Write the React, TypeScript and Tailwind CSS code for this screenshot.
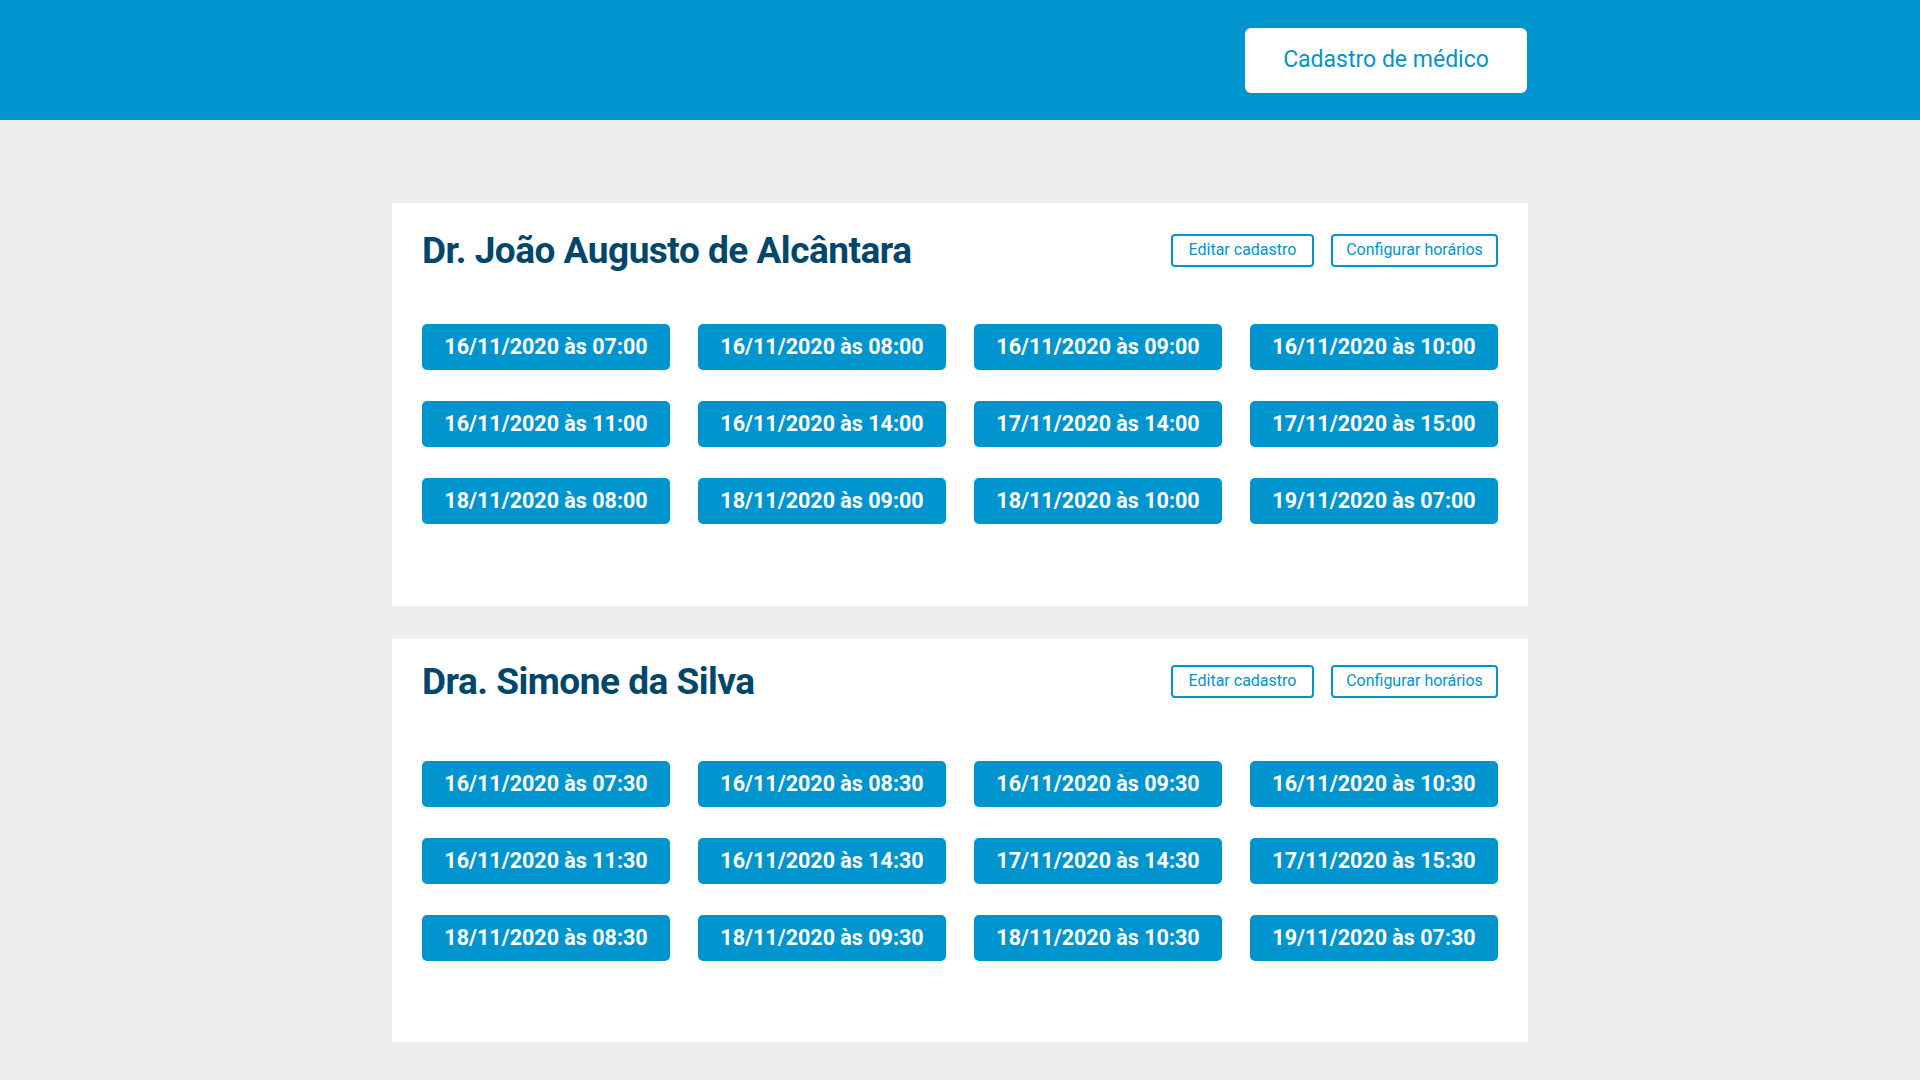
import React from "react";

const doctors = [
  {
    name: "Dr. João Augusto de Alcântara",
    pt: "pt-[30px]",
    mt: "mt-[57px]",
    pb: "pb-[82px]",
    slots: [
      "16/11/2020 às 07:00",
      "16/11/2020 às 08:00",
      "16/11/2020 às 09:00",
      "16/11/2020 às 10:00",
      "16/11/2020 às 11:00",
      "16/11/2020 às 14:00",
      "17/11/2020 às 14:00",
      "17/11/2020 às 15:00",
      "18/11/2020 às 08:00",
      "18/11/2020 às 09:00",
      "18/11/2020 às 10:00",
      "19/11/2020 às 07:00",
    ],
  },
  {
    name: "Dra. Simone da Silva",
    pt: "pt-[25px]",
    mt: "mt-[63px]",
    pb: "pb-[81px]",
    slots: [
      "16/11/2020 às 07:30",
      "16/11/2020 às 08:30",
      "16/11/2020 às 09:30",
      "16/11/2020 às 10:30",
      "16/11/2020 às 11:30",
      "16/11/2020 às 14:30",
      "17/11/2020 às 14:30",
      "17/11/2020 às 15:30",
      "18/11/2020 às 08:30",
      "18/11/2020 às 09:30",
      "18/11/2020 às 10:30",
      "19/11/2020 às 07:30",
    ],
  },
];

export default function App() {
  return (
    <div
      className="min-h-[1080px] w-full bg-[#eeeeee]"
      style={{ fontFamily: "Roboto, 'Noto Sans', sans-serif" }}
    >
      <header className="h-[120px] bg-[#0095cf] flex items-center justify-end pr-[393px]">
        <button className="w-[282px] h-[65px] bg-white rounded-[6px] text-[#0095cf] text-[23px] font-normal">
          Cadastro de médico
        </button>
      </header>
      <main className="flex flex-col items-center gap-[33px] pt-[83px]">
        {doctors.map((d) => (
          <section
            key={d.name}
            className={`w-[1136px] bg-white px-[30px] ${d.pt} ${d.pb}`}
          >
            <div className="flex items-center justify-between h-[34px]">
              <h2 className="text-[#00476b] text-[37px] font-bold tracking-[-0.5px] leading-none">
                {d.name}
              </h2>
              <div className="flex gap-[17px]">
                <button className="w-[143px] h-[33px] border-2 border-[#0095cf] rounded-[4px] text-[#0095cf] text-[16px] flex items-center justify-center">
                  Editar cadastro
                </button>
                <button className="w-[167px] h-[33px] border-2 border-[#0095cf] rounded-[4px] text-[#0095cf] text-[16px] flex items-center justify-center">
                  Configurar horários
                </button>
              </div>
            </div>
            <div className={`${d.mt} grid grid-cols-4 gap-x-[28px] gap-y-[31px]`}>
              {d.slots.map((s) => (
                <button
                  key={s}
                  className="h-[46px] bg-[#0095cf] rounded-[5px] text-white text-[21.5px] font-bold flex items-center justify-center"
                >
                  {s}
                </button>
              ))}
            </div>
          </section>
        ))}
      </main>
    </div>
  );
}
